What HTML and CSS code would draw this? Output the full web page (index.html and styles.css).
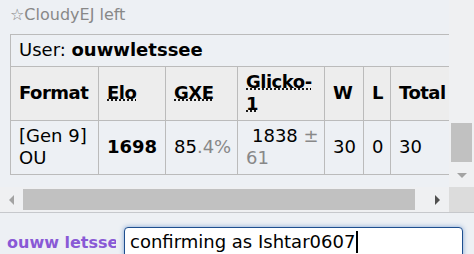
FILE: index.html
```html
<!DOCTYPE html>
<html>
<head>
	<title>Lobby - ladder rank</title>
	<meta content="width=device-width, initial-scale=1" name="viewport">
	<link rel="stylesheet" href="styles.css">
</head>
<body>
<div class="room">
	<div class="log-frame">
		<div class="log">
			<div class="log-inner">
				<div class="notice">☆CloudyEJ left</div>
				<table class="rank">
					<colgroup>
						<col class="c-format">
						<col class="c-elo">
						<col class="c-gxe">
						<col class="c-glicko">
						<col class="c-w">
						<col class="c-l">
						<col class="c-total">
					</colgroup>
					<tr class="user-row">
						<td colspan="7">User: <strong>ouwwletssee</strong></td>
					</tr>
					<tr class="head-row">
						<th>Format</th>
						<th><abbr title="Elo rating">Elo</abbr></th>
						<th><abbr title="user's percentage chance of winning a random battle (aka GLIXARE)">GXE</abbr></th>
						<th><abbr title="Glicko-1 rating: rating ± deviation">Glicko-1</abbr></th>
						<th>W</th>
						<th>L</th>
						<th>Total</th>
					</tr>
					<tr>
						<td>[Gen 9] OU</td>
						<td><strong>1698</strong></td>
						<td>85<span class="dim">.4%</span></td>
						<td class="glicko"><span class="lead">1838</span><span class="dim"> ±<br>61</span></td>
						<td>30</td>
						<td>0</td>
						<td>30</td>
					</tr>
				</table>
			</div>
		</div>
		<div class="vscroll">
			<div class="thumb"></div>
			<div class="arrow">
				<svg width="10" height="5" viewBox="0 0 10 5"><path d="M0 0h10L5 5z" fill="#a3a3a3"></path></svg>
			</div>
		</div>
		<div class="hscroll">
			<div class="arrow">
				<svg width="5" height="10" viewBox="0 0 5 10"><path d="M5 0v10L0 5z" fill="#a3a3a3"></path></svg>
			</div>
			<div class="thumb"></div>
			<div class="arrow">
				<svg width="5" height="10" viewBox="0 0 5 10"><path d="M0 0v10l5-5z" fill="#505050"></path></svg>
			</div>
		</div>
		<div class="corner"></div>
	</div>
	<div class="chatbar">
		<div class="myname">ouww letssee</div>
		<div class="textbox">confirming as Ishtar0607<span class="caret"></span></div>
	</div>
</div>
</body>
</html>
```

FILE: styles.css
```css
body {
	margin: 0;
	background: #edf0f4;
	font-family: "DejaVu Sans", Verdana, sans-serif;
	font-size: 18px;
	color: #000;
	overflow: hidden;
}

.room {
	display: flex;
	flex-direction: column;
	height: 254px;
}

/* chat log with its scrollbars */
.log-frame {
	flex: none;
	height: 212px;
	display: grid;
	grid-template-columns: 1fr 25px;
	grid-template-rows: 187px 25px;
}

.log {
	overflow: hidden;
	display: flex;
	flex-direction: column;
	justify-content: flex-end;
}

.log-inner {
	flex: none;
	padding: 0 4px 12px 10px;
}

.vscroll {
	background: #eff0f2;
	display: flex;
	flex-direction: column;
	justify-content: flex-end;
}

.vscroll .thumb {
	height: 39px;
	margin: 2px;
	background: #c1c1c1;
}

.hscroll {
	background: #eff0f2;
	display: flex;
}

.hscroll .thumb {
	width: 392px;
	margin: 2px 0;
	background: #c1c1c1;
}

.hscroll .thumb + .arrow {
	margin-left: auto;
}

.arrow {
	width: 23px;
	height: 23px;
	flex: none;
	display: flex;
	align-items: center;
	justify-content: center;
}

.vscroll .arrow {
	width: 25px;
}

.hscroll .arrow {
	height: 25px;
}

.arrow svg {
	display: block;
}

.corner {
	background: #dcdcdc;
}

.notice {
	color: #888;
	font-size: 16px;
	line-height: 22px;
	margin-bottom: 8px;
}

/* ladder rank table */
.rank {
	width: 447px;
	table-layout: fixed;
	border-collapse: collapse;
	line-height: 22px;
}

.c-format { width: 88px; }
.c-elo { width: 67px; }
.c-gxe { width: 72px; }
.c-glicko { width: 87px; }
.c-w { width: 39px; }
.c-l { width: 27px; }
.c-total { width: 67px; }

.rank td,
.rank th {
	border: 1px solid #bbb;
	padding: 4px 8px 5px 8px;
	text-align: left;
	vertical-align: middle;
}

.rank .head-row th {
	background: #ededed;
	letter-spacing: -0.5px;
}

.rank abbr {
	text-decoration: underline dotted;
}

.dim {
	color: #888;
}

.user-row td,
.rank .glicko {
	white-space: nowrap;
}

.lead {
	padding-left: 6px;
}

/* message entry bar */
.chatbar {
	flex: 1;
	display: flex;
	align-items: flex-start;
	gap: 8px;
	border-top: 1px solid #c6c8cc;
	padding: 14px 11px 0 7px;
}

.myname {
	width: 109px;
	flex: none;
	overflow: hidden;
	white-space: nowrap;
	font-size: 16px;
	font-weight: bold;
	color: #8959d6;
	line-height: 28px;
	padding-top: 2px;
}

.textbox {
	flex: 1;
	height: 30px;
	border: 1px solid #1f4f8f;
	border-radius: 4px;
	box-shadow: 0 0 5px #7ea3d3;
	background: #fff;
	padding: 0 5px;
	line-height: 28px;
	white-space: nowrap;
}

.caret {
	display: inline-block;
	width: 2px;
	height: 22px;
	background: #000;
	vertical-align: -5px;
	margin-left: 1px;
}
```
